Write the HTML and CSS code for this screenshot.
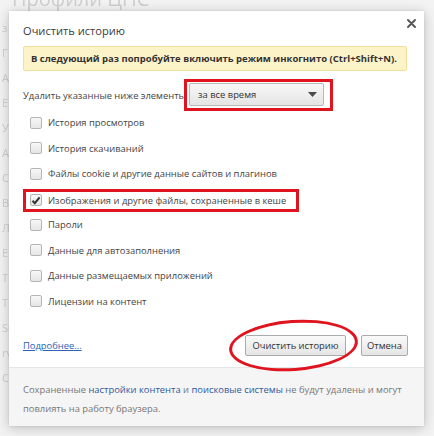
FILE: index.html
```html
<!DOCTYPE html>
<html lang="ru">
<head>
<meta charset="utf-8">
<link rel="stylesheet" href="styles.css">
</head>
<body>
<div class="page">
  <div class="page-title">Профили ЦНС</div>
  <div class="page-side">
    <span>з</span><span>Г</span><span>А</span><span>Е</span><span>У</span><span>А</span><span>С</span><span>В</span><span>Л</span><span>Е</span><span>Т</span><span>Т</span><span>SO</span><span>rv</span><span>Cu</span>
  </div>
</div>

<div class="dialog">
  <div class="dialog-body">
    <div class="title">Очистить историю</div>
    <button class="close" aria-label="Закрыть">
      <svg width="9" height="9" viewBox="0 0 9 9"><path d="M1 1L8 8M8 1L1 8" stroke="#555" stroke-width="1.9" stroke-linecap="round"/></svg>
    </button>
    <div class="banner">В следующий раз попробуйте включить режим инкогнито (Ctrl+Shift+N).</div>
    <div class="period">
      <span class="period-label">Удалить указанные ниже элементы</span>
      <span class="mark-box select-mark">
        <span class="select">за все время
          <svg class="arrow" width="9" height="5" viewBox="0 0 9 5"><path d="M0 0H9L4.5 5Z" fill="#4a4a4a"/></svg>
        </span>
      </span>
    </div>
    <ul class="items">
      <li class="item"><span class="row"><span class="cb"></span>История просмотров</span></li>
      <li class="item"><span class="row"><span class="cb"></span>История скачиваний</span></li>
      <li class="item"><span class="row"><span class="cb"></span>Файлы cookie и другие данные сайтов и плагинов</span></li>
      <li class="item"><span class="row row-marked"><span class="cb cb-checked"><svg width="10" height="9" viewBox="0 0 10 9"><path d="M1.5 4.8L3.8 7.2L8.6 1.4" stroke="#333" stroke-width="2" fill="none"/></svg></span>Изображения и другие файлы, сохраненные в кеше</span></li>
      <li class="item"><span class="row"><span class="cb"></span>Пароли</span></li>
      <li class="item"><span class="row"><span class="cb"></span>Данные для автозаполнения</span></li>
      <li class="item"><span class="row"><span class="cb"></span>Данные размещаемых приложений</span></li>
      <li class="item"><span class="row"><span class="cb"></span>Лицензии на контент</span></li>
    </ul>
    <div class="actions">
      <a class="more" href="#">Подробнее...</a>
      <div class="buttons">
        <span class="circled"><button class="btn btn-clear">Очистить историю</button></span>
        <button class="btn btn-cancel">Отмена</button>
      </div>
    </div>
  </div>
  <div class="footer">Сохраненные <a href="#">настройки контента</a> и <a href="#">поисковые системы</a> не будут удалены и могут повлиять на работу браузера.</div>
</div>
</body>
</html>
```

FILE: styles.css
```css
* { box-sizing: border-box; }
html, body { margin: 0; padding: 0; }
body {
  width: 434px;
  height: 436px;
  overflow: hidden;
  background: #f3f3f3;
  font-family: "Open Sans", "Noto Sans", sans-serif;
  color: #333;
  position: relative;
}

.page {
  color: #cfcfcf;
  filter: blur(0.6px);
}
.page-title {
  font-size: 20px;
  line-height: 20px;
  margin: -11px 0 0 12px;
}
.page-side {
  display: flex;
  flex-direction: column;
  margin: 6px 0 0 2px;
  font-size: 11px;
  line-height: 25px;
}

.dialog {
  position: absolute;
  left: 9px;
  top: 11px;
  width: 415px;
  height: 415px;
  background: #fff;
  box-shadow: 0 2px 12px rgba(0,0,0,0.22), 0 0 2px rgba(0,0,0,0.12);
  display: flex;
  flex-direction: column;
}
.dialog-body {
  position: relative;
  padding: 10px 17px 11px 14px;
}
.title {
  font-size: 11.1px;
  line-height: 20px;
  height: 20px;
  color: #3a3a3a;
}
.close {
  position: absolute;
  top: 8px;
  right: 8px;
  border: 0;
  background: none;
  padding: 0;
  width: 9px;
  height: 9px;
  display: flex;
}

.banner {
  margin-top: 5px;
  height: 25px;
  line-height: 23px;
  background: #fdf3c8;
  border: 1px solid #f1df9c;
  border-radius: 2px;
  padding: 0 7px;
  font-size: 9.5px;
  font-weight: 700;
  color: #333;
  white-space: nowrap;
}

.period {
  margin-top: 8px;
  display: flex;
  align-items: center;
  font-size: 9.4px;
}
.period-label {
  width: 161px;
  white-space: nowrap;
  color: #444;
}
.mark-box {
  border: 3px solid #e0141e;
}
.select-mark {
  display: inline-flex;
  padding: 1px 6px 2px 2px;
  position: relative;
}
.select {
  width: 135px;
  height: 23px;
  border: 1px solid #b9b9b9;
  border-radius: 2px;
  background: linear-gradient(#f8f8f8, #e4e4e4);
  display: flex;
  align-items: center;
  justify-content: space-between;
  padding: 0 6px 0 8px;
  color: #333;
  font-size: 9.4px;
}

.items {
  list-style: none;
  margin: -1px 0 0 0;
  padding: 0;
}
.item {
  height: 25.5px;
  display: flex;
  align-items: center;
  font-size: 9.4px;
  color: #444;
}
.row {
  display: inline-flex;
  align-items: center;
  height: 23px;
  border: 3px solid transparent;
  padding: 0 10px 0 4px;
  white-space: nowrap;
}
.row-marked {
  border-color: #e0141e;
  margin-top: 2px;
}
.cb {
  width: 12px;
  height: 12px;
  border: 1px solid #b5b5b5;
  border-radius: 2px;
  background: linear-gradient(#f7f7f7, #e6e6e6);
  margin-right: 6px;
  display: flex;
  align-items: center;
  justify-content: center;
}
.cb svg { display: block; }

.actions {
  margin-top: 21px;
  display: flex;
  align-items: center;
  justify-content: space-between;
  height: 21px;
}
.more {
  font-size: 9.4px;
  color: #2e63b5;
  text-decoration: underline;
}
.buttons {
  display: flex;
  gap: 15px;
  margin-right: -1px;
}
.circled {
  position: relative;
  display: inline-flex;
}
.circled::after {
  content: "";
  position: absolute;
  left: -16px;
  right: -12px;
  top: -15px;
  bottom: -15px;
  border: 3px solid #e0141e;
  border-radius: 50%;
  transform: rotate(-4deg);
  pointer-events: none;
}
.btn {
  height: 21px;
  border: 1px solid #ababab;
  border-radius: 2px;
  background: linear-gradient(#fafafa, #e5e5e5);
  font-family: inherit;
  font-size: 9.4px;
  color: #333;
  padding: 0;
}
.btn-clear { width: 101px; }
.btn-cancel { width: 47px; }

.footer {
  flex: 1;
  background: #f5f5f5;
  border-top: 1px solid #e6e6e6;
  padding: 12px 16px 0 14px;
  font-size: 9.4px;
  line-height: 19px;
  color: #777;
}
.footer a {
  color: #2f5a9c;
  text-decoration: none;
}
```
